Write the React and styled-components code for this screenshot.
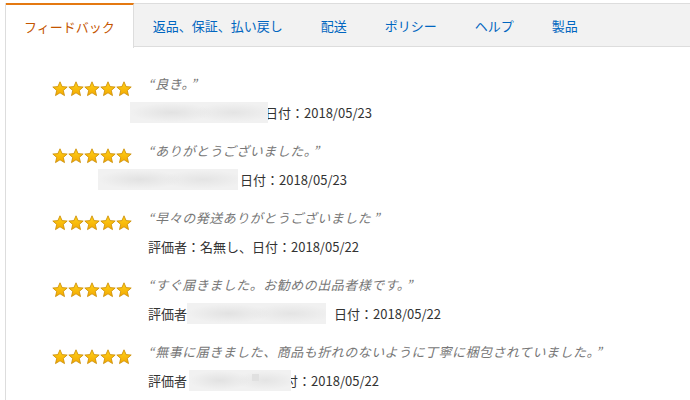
import React from "react";
import styled, { createGlobalStyle } from "styled-components";

const GlobalStyle = createGlobalStyle`
  html, body {
    margin: 0;
    padding: 0;
    background: #fff;
  }
  body {
    font-family: "Noto Sans CJK JP", "Liberation Sans", sans-serif;
  }
`;

const Page = styled.div`
  padding: 3px 0 0 5px;
  min-height: 100vh;
  box-sizing: border-box;
`;

const Panel = styled.div`
  border-left: 1px solid #dddddd;
  min-height: 397px;
`;

const TabBar = styled.div`
  display: flex;
  height: 42px;
  background: #f2f2f2;
  border-top: 1px solid #dddddd;
  border-bottom: 1px solid #dddddd;
`;

const Tab = styled.div`
  display: flex;
  align-items: center;
  height: 42px;
  padding: 0 ${(p) => (p.$active ? "18px" : "19px")};
  font-size: 13px;
  white-space: nowrap;
  color: ${(p) => (p.$active ? "#c45500" : "#0066c0")};
  background: ${(p) => (p.$active ? "#fff" : "transparent")};
  border-right: ${(p) => (p.$active ? "1px solid #dddddd" : "none")};
  border-top: ${(p) => (p.$active ? "2px solid #e47911" : "none")};
  margin-top: ${(p) => (p.$active ? "-1px" : "0")};
  margin-bottom: ${(p) => (p.$active ? "-1px" : "0")};
  padding-bottom: ${(p) => (p.$active ? "1px" : "0")};
  cursor: pointer;
`;

const List = styled.div`
  padding: 27px 0 0 46px;
  display: flex;
  flex-direction: column;
  gap: 18px;
`;

const Row = styled.div`
  display: flex;
`;

const Stars = styled.div`
  width: 96px;
  flex-shrink: 0;
  display: flex;
  padding-top: 7px;
  height: 16px;
`;

const Body = styled.div`
  display: flex;
  flex-direction: column;
  gap: 8px;
`;

const Quote = styled.div`
  font-size: 13px;
  line-height: 20px;
  font-style: italic;
  color: #777;
  white-space: nowrap;
  letter-spacing: 0.5px;
`;

const QuoteMark = styled.span`
  letter-spacing: 0;
  margin-left: ${(p) => (p.$close ? "2px" : "0")};
  margin-right: ${(p) => (p.$close ? "0" : "1px")};
`;

const Meta = styled.div`
  display: flex;
  align-items: center;
  height: 21px;
  font-size: 13px;
  color: #333;
  white-space: nowrap;
`;

const Redact = styled.span`
  position: relative;
  z-index: 1;
  display: block;
  height: 21px;
  width: ${(p) => p.$width}px;
  margin-left: ${(p) => p.$left || 0}px;
  margin-right: ${(p) => p.$right || 0}px;
  background:
    radial-gradient(ellipse 30% 45% at 30% 50%, #e2e2e2, rgba(240, 240, 240, 0)),
    radial-gradient(ellipse 30% 45% at 75% 50%, #e4e4e4, rgba(240, 240, 240, 0)),
    #f1f1f1;

  &::after {
    content: "";
    display: ${(p) => (p.$dot ? "block" : "none")};
    position: absolute;
    left: ${(p) => p.$dot}px;
    top: 4px;
    width: 7px;
    height: 7px;
    background: #e0e0e0;
  }
`;

const Star = () => (
  <svg width="16" height="16" viewBox="0 0 16 16">
    <defs>
      <linearGradient id="sg" x1="0" y1="0" x2="0" y2="1">
        <stop offset="0" stopColor="#ffd21a" />
        <stop offset="1" stopColor="#f3a800" />
      </linearGradient>
    </defs>
    <polygon
      points="8,0.8 10.1,5.6 15.2,6 11.3,9.4 12.5,14.6 8,11.8 3.5,14.6 4.7,9.4 0.8,6 5.9,5.6"
      fill="url(#sg)"
      stroke="#c98a00"
      strokeWidth="0.8"
      strokeLinejoin="round"
    />
  </svg>
);

const FiveStars = () => (
  <Stars>
    {[0, 1, 2, 3, 4].map((i) => (
      <Star key={i} />
    ))}
  </Stars>
);

const Said = ({ children }) => (
  <Quote>
    <QuoteMark>“</QuoteMark>
    {children}
    <QuoteMark $close>”</QuoteMark>
  </Quote>
);

const tabs = ["フィードバック", "返品、保証、払い戻し", "配送", "ポリシー", "ヘルプ", "製品"];

export default function App() {
  return (
    <Page>
      <GlobalStyle />
      <Panel>
        <TabBar>
          {tabs.map((t, i) => (
            <Tab key={t} $active={i === 0}>
              {t}
            </Tab>
          ))}
        </TabBar>
        <List>
          <Row>
            <FiveStars />
            <Body>
              <Said>良き。</Said>
              <Meta>
                <Redact $left={-18} $width={138} $right={-3} />
                <span>日付：2018/05/23</span>
              </Meta>
            </Body>
          </Row>
          <Row>
            <FiveStars />
            <Body>
              <Said>ありがとうございました。</Said>
              <Meta>
                <Redact $left={-50} $width={140} $right={2} />
                <span>日付：2018/05/23</span>
              </Meta>
            </Body>
          </Row>
          <Row>
            <FiveStars />
            <Body>
              <Said>早々の発送ありがとうございました</Said>
              <Meta>評価者：名無し、日付：2018/05/22</Meta>
            </Body>
          </Row>
          <Row>
            <FiveStars />
            <Body>
              <Said>すぐ届きました。お勧めの出品者様です。</Said>
              <Meta>
                <span>評価者</span>
                <Redact $width={139} $right={8} />
                <span>日付：2018/05/22</span>
              </Meta>
            </Body>
          </Row>
          <Row>
            <FiveStars />
            <Body>
              <Said>無事に届きました、商品も折れのないように丁寧に梱包されていました。</Said>
              <Meta>
                <span>評価者</span>
                <Redact $left={2} $width={102} $right={-6} $dot={63} />
                <span>付：2018/05/22</span>
              </Meta>
            </Body>
          </Row>
        </List>
      </Panel>
    </Page>
  );
}
